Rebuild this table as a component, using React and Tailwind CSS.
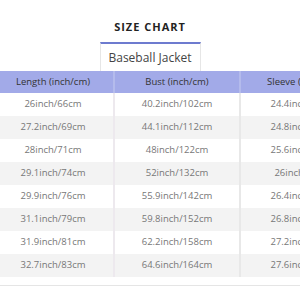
import React from "react";

const rows = [
  ["26inch/66cm", "40.2inch/102cm", "24.4inch/62cm"],
  ["27.2inch/69cm", "44.1inch/112cm", "24.8inch/63cm"],
  ["28inch/71cm", "48inch/122cm", "25.6inch/65cm"],
  ["29.1inch/74cm", "52inch/132cm", "26inch/66cm"],
  ["29.9inch/76cm", "55.9inch/142cm", "26.4inch/67cm"],
  ["31.1inch/79cm", "59.8inch/152cm", "26.8inch/68cm"],
  ["31.9inch/81cm", "62.2inch/158cm", "27.2inch/69cm"],
  ["32.7inch/83cm", "64.6inch/164cm", "27.6inch/70cm"],
];

export default function App() {
  return (
    <div
      className="w-[300px] h-[300px] overflow-hidden bg-white"
      style={{ fontFamily: '"Open Sans", "DejaVu Sans", sans-serif' }}
    >
      <div className="pt-[20px] text-center text-[11px] leading-[14px] font-bold tracking-[1px] text-[#222]">
        SIZE CHART
      </div>
      <div className="mt-[8px] flex justify-center">
        <div className="w-[101px] h-[29px] border-t-2 border-t-[#6d7bcf] border-x border-x-[#e6e6e6] flex items-center justify-center text-[12px] text-[#444]">
          Baseball Jacket
        </div>
      </div>
      <div className="ml-[-7px] w-[420px]">
        <div className="flex h-[22px] bg-[#a2aae8] text-[9.5px] text-[#333]">
          <div className="w-[120px] flex items-center justify-center">Length (inch/cm)</div>
          <div className="w-[126px] flex items-center justify-center border-l-2 border-[#b4bbec]">Bust (inch/cm)</div>
          <div className="w-[126px] flex items-center justify-center border-l-2 border-[#b4bbec]">Sleeve (inch/cm)</div>
        </div>
        {rows.map((r, i) => (
          <div
            key={i}
            className={`flex h-[23px] text-[9.5px] text-[#777] ${i % 2 === 1 ? "bg-[#f3f3f3]" : "bg-white"}`}
          >
            <div className="w-[120px] flex items-center justify-center">{r[0]}</div>
            <div className="w-[126px] flex items-center justify-center border-l-2 border-[#ede9ee]">{r[1]}</div>
            <div className="w-[126px] flex items-center justify-center border-l-2 border-[#e8e8e8]">{r[2]}</div>
          </div>
        ))}
      </div>
      <div className="mt-[8px] h-px bg-[#e5e5e5]" />
    </div>
  );
}
